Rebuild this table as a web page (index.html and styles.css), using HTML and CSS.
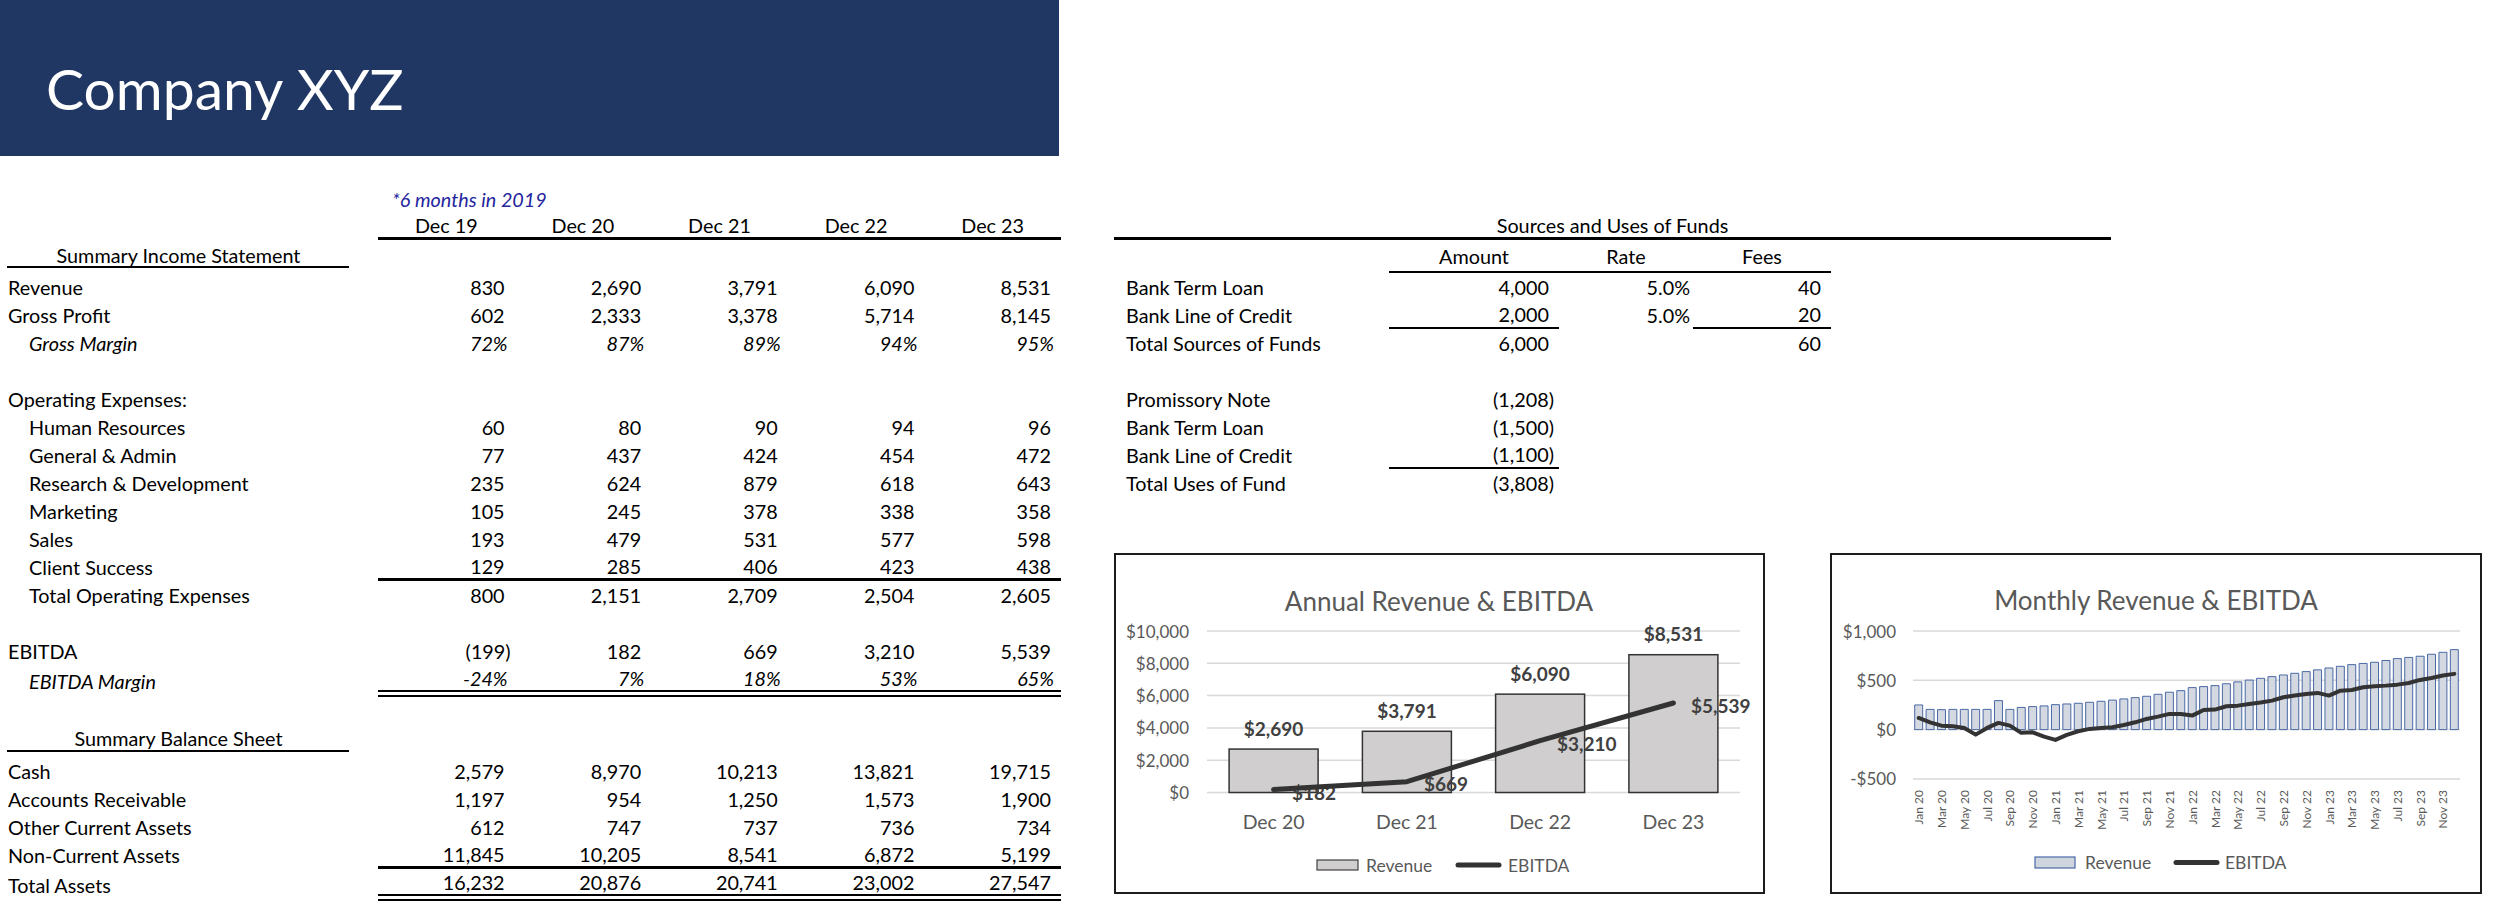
FILE: index.html
```html
<!DOCTYPE html>
<html lang="en">
<head>
<meta charset="utf-8">
<title>Company XYZ</title>
<link rel="stylesheet" href="styles.css">
</head>
<body>
<header class="banner"><h1 class="title">Company XYZ</h1></header>
<main class="page">
  <section class="fin">
    <div class="row r-note"><div class="lab"></div><div class="sp"></div><div class="note">*6 months in 2019</div></div>
    <div class="row r-head"><div class="lab"></div><div class="sp"></div><div class="hd">Dec 19</div><div class="hd">Dec 20</div><div class="hd">Dec 21</div><div class="hd">Dec 22</div><div class="hd">Dec 23</div></div>
    <div class="row r-sec"><div class="lab sec">Summary Income Statement</div></div>
    <div class="row"><div class="lab">Revenue</div><div class="sp"></div><div class="n">830</div><div class="n">2,690</div><div class="n">3,791</div><div class="n">6,090</div><div class="n">8,531</div></div>
    <div class="row"><div class="lab">Gross Profit</div><div class="sp"></div><div class="n">602</div><div class="n">2,333</div><div class="n">3,378</div><div class="n">5,714</div><div class="n">8,145</div></div>
    <div class="row"><div class="lab in it">Gross Margin</div><div class="sp"></div><div class="n pct">72%</div><div class="n pct">87%</div><div class="n pct">89%</div><div class="n pct">94%</div><div class="n pct">95%</div></div>
    <div class="row"><div class="lab"></div></div>
    <div class="row"><div class="lab">Operating Expenses:</div></div>
    <div class="row"><div class="lab in">Human Resources</div><div class="sp"></div><div class="n">60</div><div class="n">80</div><div class="n">90</div><div class="n">94</div><div class="n">96</div></div>
    <div class="row"><div class="lab in">General &amp; Admin</div><div class="sp"></div><div class="n">77</div><div class="n">437</div><div class="n">424</div><div class="n">454</div><div class="n">472</div></div>
    <div class="row"><div class="lab in">Research &amp; Development</div><div class="sp"></div><div class="n">235</div><div class="n">624</div><div class="n">879</div><div class="n">618</div><div class="n">643</div></div>
    <div class="row"><div class="lab in">Marketing</div><div class="sp"></div><div class="n">105</div><div class="n">245</div><div class="n">378</div><div class="n">338</div><div class="n">358</div></div>
    <div class="row"><div class="lab in">Sales</div><div class="sp"></div><div class="n">193</div><div class="n">479</div><div class="n">531</div><div class="n">577</div><div class="n">598</div></div>
    <div class="row r-line"><div class="lab in">Client Success</div><div class="sp"></div><div class="n">129</div><div class="n">285</div><div class="n">406</div><div class="n">423</div><div class="n">438</div></div>
    <div class="row"><div class="lab in">Total Operating Expenses</div><div class="sp"></div><div class="n">800</div><div class="n">2,151</div><div class="n">2,709</div><div class="n">2,504</div><div class="n">2,605</div></div>
    <div class="row"><div class="lab"></div></div>
    <div class="row"><div class="lab">EBITDA</div><div class="sp"></div><div class="n neg">(199)</div><div class="n">182</div><div class="n">669</div><div class="n">3,210</div><div class="n">5,539</div></div>
    <div class="row r-dbl"><div class="lab in it">EBITDA Margin</div><div class="sp"></div><div class="n pct">-24%</div><div class="n pct">7%</div><div class="n pct">18%</div><div class="n pct">53%</div><div class="n pct">65%</div></div>
    <div class="row r-gap"><div class="lab"></div></div>
    <div class="row r-sec2"><div class="lab sec">Summary Balance Sheet</div></div>
    <div class="row"><div class="lab">Cash</div><div class="sp"></div><div class="n">2,579</div><div class="n">8,970</div><div class="n">10,213</div><div class="n">13,821</div><div class="n">19,715</div></div>
    <div class="row"><div class="lab">Accounts Receivable</div><div class="sp"></div><div class="n">1,197</div><div class="n">954</div><div class="n">1,250</div><div class="n">1,573</div><div class="n">1,900</div></div>
    <div class="row"><div class="lab">Other Current Assets</div><div class="sp"></div><div class="n">612</div><div class="n">747</div><div class="n">737</div><div class="n">736</div><div class="n">734</div></div>
    <div class="row r-line"><div class="lab">Non-Current Assets</div><div class="sp"></div><div class="n">11,845</div><div class="n">10,205</div><div class="n">8,541</div><div class="n">6,872</div><div class="n">5,199</div></div>
    <div class="row r-dbl"><div class="lab">Total Assets</div><div class="sp"></div><div class="n">16,232</div><div class="n">20,876</div><div class="n">20,741</div><div class="n">23,002</div><div class="n">27,547</div></div>
  </section>

  <section class="side">
    <div class="srow s-spacer"></div>
    <div class="s-title">Sources and Uses of Funds</div>
    <div class="srow s-head"><div></div><div class="sh">Amount</div><div class="sh">Rate</div><div class="sh">Fees</div><div></div></div>
    <div class="srow"><div class="slab">Bank Term Loan</div><div class="n">4,000</div><div class="n rate">5.0%</div><div class="n">40</div></div>
    <div class="srow"><div class="slab">Bank Line of Credit</div><div class="n ul">2,000</div><div class="n rate">5.0%</div><div class="n ul">20</div></div>
    <div class="srow"><div class="slab">Total Sources of Funds</div><div class="n">6,000</div><div class="n rate"></div><div class="n">60</div></div>
    <div class="srow"></div>
    <div class="srow"><div class="slab">Promissory Note</div><div class="n sneg">(1,208)</div></div>
    <div class="srow"><div class="slab">Bank Term Loan</div><div class="n sneg">(1,500)</div></div>
    <div class="srow"><div class="slab">Bank Line of Credit</div><div class="n sneg ul">(1,100)</div></div>
    <div class="srow"><div class="slab">Total Uses of Fund</div><div class="n sneg">(3,808)</div></div>

    <div class="charts">
      <figure class="chart chart-annual">
        <svg width="647" height="337" viewBox="0 0 647 337" xmlns="http://www.w3.org/2000/svg">
          <g transform="translate(-2,-2)">
            <text class="ctitle" x="325" y="48">Annual Revenue &amp; EBITDA</text>
            <g class="grid">
              <line x1="93" x2="626" y1="78" y2="78"/>
              <line x1="93" x2="626" y1="110.3" y2="110.3"/>
              <line x1="93" x2="626" y1="142.6" y2="142.6"/>
              <line x1="93" x2="626" y1="174.9" y2="174.9"/>
              <line x1="93" x2="626" y1="207.2" y2="207.2"/>
              <line x1="93" x2="626" y1="239.5" y2="239.5"/>
            </g>
            <g class="ylab">
              <text x="75" y="78">$10,000</text>
              <text x="75" y="110.3">$8,000</text>
              <text x="75" y="142.6">$6,000</text>
              <text x="75" y="174.9">$4,000</text>
              <text x="75" y="207.2">$2,000</text>
              <text x="75" y="239.5">$0</text>
            </g>
            <g class="abars">
              <rect x="115.1" y="196.06" width="89" height="43.44"/>
              <rect x="248.4" y="178.28" width="89" height="61.22"/>
              <rect x="381.6" y="141.15" width="89" height="98.35"/>
              <rect x="514.9" y="101.72" width="89" height="137.78"/>
            </g>
            <g class="dlab mid">
              <text x="159.6" y="175">$2,690</text>
              <text x="292.9" y="157.3">$3,791</text>
              <text x="426.1" y="120.2">$6,090</text>
              <text x="559.4" y="80.7">$8,531</text>
            </g>
            <g class="dlab">
              <text x="178" y="239">$182</text>
              <text x="310" y="230">$669</text>
              <text x="443" y="190">$3,210</text>
              <text x="577" y="152">$5,539</text>
            </g>
            <polyline class="eline" points="159.6,236.6 292.9,228.7 426.1,187.7 559.4,150"/>
            <g class="xlab">
              <text x="159.6" y="268">Dec 20</text>
              <text x="292.9" y="268">Dec 21</text>
              <text x="426.1" y="268">Dec 22</text>
              <text x="559.4" y="268">Dec 23</text>
            </g>
            <g class="legend">
              <rect class="lg-a" x="203" y="307" width="41" height="10"/>
              <text x="252" y="312">Revenue</text>
              <line class="lg-line" x1="344" x2="385" y1="312" y2="312"/>
              <text x="394" y="312">EBITDA</text>
            </g>
          </g>
        </svg>
      </figure>

      <figure class="chart chart-monthly">
        <svg width="648" height="337" viewBox="0 0 648 337" xmlns="http://www.w3.org/2000/svg">
          <g transform="translate(-2,-2)">
            <text class="ctitle" x="326" y="47">Monthly Revenue &amp; EBITDA</text>
            <g class="grid">
              <line x1="83" x2="630" y1="78" y2="78"/>
              <line x1="83" x2="630" y1="127.3" y2="127.3"/>
              <line x1="83" x2="630" y1="176.6" y2="176.6"/>
              <line x1="83" x2="630" y1="225.9" y2="225.9"/>
            </g>
            <g class="ylab">
              <text x="66" y="78">$1,000</text>
              <text x="66" y="127.3">$500</text>
              <text x="66" y="176.6">$0</text>
              <text x="66" y="225.9">-$500</text>
            </g>
            <g transform="translate(83,176.6) scale(11.396,-0.0986)">
              <g class="mbars">
                <rect x="0.15" width="0.7" height="250"/><rect x="1.15" width="0.7" height="205"/><rect x="2.15" width="0.7" height="202"/><rect x="3.15" width="0.7" height="205"/>
                <rect x="4.15" width="0.7" height="205"/><rect x="5.15" width="0.7" height="205"/><rect x="6.15" width="0.7" height="205"/><rect x="7.15" width="0.7" height="294"/>
                <rect x="8.15" width="0.7" height="205"/><rect x="9.15" width="0.7" height="225"/><rect x="10.15" width="0.7" height="233"/><rect x="11.15" width="0.7" height="240"/>
                <rect x="12.15" width="0.7" height="253"/><rect x="13.15" width="0.7" height="260"/><rect x="14.15" width="0.7" height="267"/><rect x="15.15" width="0.7" height="277"/>
                <rect x="16.15" width="0.7" height="287"/><rect x="17.15" width="0.7" height="299"/><rect x="18.15" width="0.7" height="311"/><rect x="19.15" width="0.7" height="324"/>
                <rect x="20.15" width="0.7" height="338"/><rect x="21.15" width="0.7" height="358"/><rect x="22.15" width="0.7" height="379"/><rect x="23.15" width="0.7" height="395"/>
                <rect x="24.15" width="0.7" height="426"/><rect x="25.15" width="0.7" height="436"/><rect x="26.15" width="0.7" height="446"/><rect x="27.15" width="0.7" height="465"/>
                <rect x="28.15" width="0.7" height="484"/><rect x="29.15" width="0.7" height="502"/><rect x="30.15" width="0.7" height="520"/><rect x="31.15" width="0.7" height="537"/>
                <rect x="32.15" width="0.7" height="554"/><rect x="33.15" width="0.7" height="571"/><rect x="34.15" width="0.7" height="588"/><rect x="35.15" width="0.7" height="606"/>
                <rect x="36.15" width="0.7" height="625"/><rect x="37.15" width="0.7" height="642"/><rect x="38.15" width="0.7" height="659"/><rect x="39.15" width="0.7" height="671"/>
                <rect x="40.15" width="0.7" height="683"/><rect x="41.15" width="0.7" height="701"/><rect x="42.15" width="0.7" height="720"/><rect x="43.15" width="0.7" height="732"/>
                <rect x="44.15" width="0.7" height="744"/><rect x="45.15" width="0.7" height="764"/><rect x="46.15" width="0.7" height="784"/><rect x="47.15" width="0.7" height="811"/>
              </g>
              <polyline class="mline" points="0.5,118 1.5,74 2.5,40 3.5,34 4.5,17 5.5,-51 6.5,17 7.5,68 8.5,40 9.5,-33 10.5,-27 11.5,-71 12.5,-105 13.5,-54 14.5,-17 15.5,7 16.5,17 17.5,24 18.5,47 19.5,74 20.5,108 21.5,132 22.5,159 23.5,159 24.5,142 25.5,199 26.5,203 27.5,237 28.5,243 29.5,260 30.5,274 31.5,294 32.5,328 33.5,345 34.5,362 35.5,372 36.5,345 37.5,395 38.5,402 39.5,429 40.5,439 41.5,446 42.5,456 43.5,473 44.5,504 45.5,524 46.5,548 47.5,565"/>
            </g>
            <g class="mxlab">
              <text transform="translate(88.7,237) rotate(-90)">Jan 20</text>
              <text transform="translate(111.5,237) rotate(-90)">Mar 20</text>
              <text transform="translate(134.3,237) rotate(-90)">May 20</text>
              <text transform="translate(157.1,237) rotate(-90)">Jul 20</text>
              <text transform="translate(179.9,237) rotate(-90)">Sep 20</text>
              <text transform="translate(202.7,237) rotate(-90)">Nov 20</text>
              <text transform="translate(225.5,237) rotate(-90)">Jan 21</text>
              <text transform="translate(248.2,237) rotate(-90)">Mar 21</text>
              <text transform="translate(271,237) rotate(-90)">May 21</text>
              <text transform="translate(293.8,237) rotate(-90)">Jul 21</text>
              <text transform="translate(316.6,237) rotate(-90)">Sep 21</text>
              <text transform="translate(339.4,237) rotate(-90)">Nov 21</text>
              <text transform="translate(362.2,237) rotate(-90)">Jan 22</text>
              <text transform="translate(385,237) rotate(-90)">Mar 22</text>
              <text transform="translate(407.8,237) rotate(-90)">May 22</text>
              <text transform="translate(430.6,237) rotate(-90)">Jul 22</text>
              <text transform="translate(453.4,237) rotate(-90)">Sep 22</text>
              <text transform="translate(476.2,237) rotate(-90)">Nov 22</text>
              <text transform="translate(499,237) rotate(-90)">Jan 23</text>
              <text transform="translate(521.8,237) rotate(-90)">Mar 23</text>
              <text transform="translate(544.5,237) rotate(-90)">May 23</text>
              <text transform="translate(567.3,237) rotate(-90)">Jul 23</text>
              <text transform="translate(590.1,237) rotate(-90)">Sep 23</text>
              <text transform="translate(612.9,237) rotate(-90)">Nov 23</text>
            </g>
            <g class="legend">
              <rect class="lg-m" x="205" y="304" width="40" height="11"/>
              <text x="255" y="309.5">Revenue</text>
              <line class="lg-line" x1="346" x2="387" y1="309.5" y2="309.5"/>
              <text x="395" y="309.5">EBITDA</text>
            </g>
          </g>
        </svg>
      </figure>
    </div>
  </section>
</main>
</body>
</html>
```

FILE: styles.css
```css
* {
  box-sizing: border-box;
  margin: 0;
  padding: 0;
}

html, body {
  background: #ffffff;
}

body {
  width: 2500px;
  height: 921px;
  overflow: hidden;
  font-family: Lato, Carlito, "Liberation Sans", sans-serif;
  color: #000000;
}

/* ---------- banner ---------- */
.banner {
  width: 1059px;
  height: 156px;
  background: #203763;
  padding: 54px 0 0 46px;
}

.title {
  font-size: 57px;
  font-weight: 400;
  line-height: 1.2;
  color: #ffffff;
}

/* ---------- page layout ---------- */
.page {
  display: flex;
  align-items: flex-start;
  gap: 53px;
  padding: 29px 0 0 7px;
}

/* ---------- financial summary ---------- */
.fin {
  width: 1054px;
  font-size: 19.8px;
}

.row {
  display: grid;
  grid-template-columns: 342px 29px repeat(5, 136.6px);
  height: 28px;
}

.row > div {
  display: flex;
  align-items: center;
  white-space: nowrap;
}

.lab {
  padding-left: 1px;
}

.lab.in {
  padding-left: 22px;
}

.it {
  font-style: italic;
}

.n {
  justify-content: flex-end;
  padding-right: 10px;
}

.n.neg {
  padding-right: 4px;
}

.n.pct {
  font-style: italic;
  padding-right: 7px;
}

.r-note {
  height: 28px;
}

.note {
  grid-column: 3 / span 3;
  font-style: italic;
  color: #25259e;
  padding-left: 14px;
}

.r-head {
  height: 27px;
}

.hd {
  justify-content: center;
  border-bottom: 3px solid #000;
}

.r-sec {
  height: 33px;
  align-items: start;
}

.sec {
  height: 28px;
  justify-content: center;
  padding-top: 3px;
  border-bottom: 2px solid #000;
}

.r-sec2 {
  height: 35px;
  align-items: start;
}

.r-sec2 .sec {
  height: 30px;
  padding-top: 4px;
}

.r-line .n {
  border-bottom: 3px solid #000;
}

.r-dbl {
  height: 32px;
}

.r-dbl .n {
  border-bottom: 7px double #000;
}

.r-gap {
  height: 25px;
}

/* ---------- sources & uses ---------- */
.side {
  width: 997px;
  font-size: 19.8px;
}

.srow {
  display: grid;
  grid-template-columns: 275px 170px 134px 138px 280px;
  height: 28px;
}

.srow > div {
  display: flex;
  align-items: center;
  white-space: nowrap;
}

.s-spacer {
  height: 28px;
}

.s-title {
  height: 27px;
  display: flex;
  align-items: center;
  justify-content: center;
  border-bottom: 3px solid #000;
}

.s-head {
  height: 33px;
}

.sh {
  justify-content: center;
  border-bottom: 2px solid #000;
}

.slab {
  padding-left: 12px;
}

.n.rate {
  padding-right: 3px;
}

.n.sneg {
  padding-right: 5px;
}

.n.ul {
  border-bottom: 2px solid #000;
}

/* ---------- charts ---------- */
.charts {
  display: flex;
  gap: 65px;
  margin-top: 56px;
}

.chart {
  height: 341px;
  border: 2px solid #1c1c1c;
  background: #ffffff;
}

.chart-annual {
  width: 651px;
}

.chart-monthly {
  width: 652px;
}

.chart svg {
  display: block;
  font-family: Lato, Carlito, "Liberation Sans", sans-serif;
}

.ctitle {
  font-size: 26px;
  fill: #595959;
  text-anchor: middle;
  dominant-baseline: central;
}

.grid line {
  stroke: #d9d9d9;
  stroke-width: 1.5;
}

.ylab text {
  font-size: 17px;
  fill: #595959;
  text-anchor: end;
  dominant-baseline: central;
}

.abars rect {
  fill: #d0cece;
  stroke: #333333;
  stroke-width: 1.5;
}

.dlab text {
  font-size: 19px;
  font-weight: 700;
  fill: #404040;
  dominant-baseline: central;
}

.dlab.mid text {
  text-anchor: middle;
}

.eline {
  fill: none;
  stroke: #333333;
  stroke-width: 5;
  stroke-linecap: round;
  stroke-linejoin: round;
}

.xlab text {
  font-size: 19.5px;
  fill: #595959;
  text-anchor: middle;
  dominant-baseline: central;
}

.legend text {
  font-size: 17.5px;
  fill: #595959;
  dominant-baseline: central;
}

.lg-a {
  fill: #d0cece;
  stroke: #404040;
  stroke-width: 1.2;
}

.lg-m {
  fill: #cfd5df;
  stroke: #4a69a6;
  stroke-width: 1.2;
}

.lg-line {
  stroke: #333333;
  stroke-width: 5;
  stroke-linecap: round;
}

.mbars rect {
  fill: #d3d8e1;
  stroke: #4a69a6;
  stroke-width: 1;
  vector-effect: non-scaling-stroke;
}

.mline {
  fill: none;
  stroke: #333333;
  stroke-width: 4;
  stroke-linejoin: round;
  stroke-linecap: round;
  vector-effect: non-scaling-stroke;
}

.mxlab text {
  font-size: 12px;
  fill: #595959;
  text-anchor: end;
  dominant-baseline: central;
}
```
